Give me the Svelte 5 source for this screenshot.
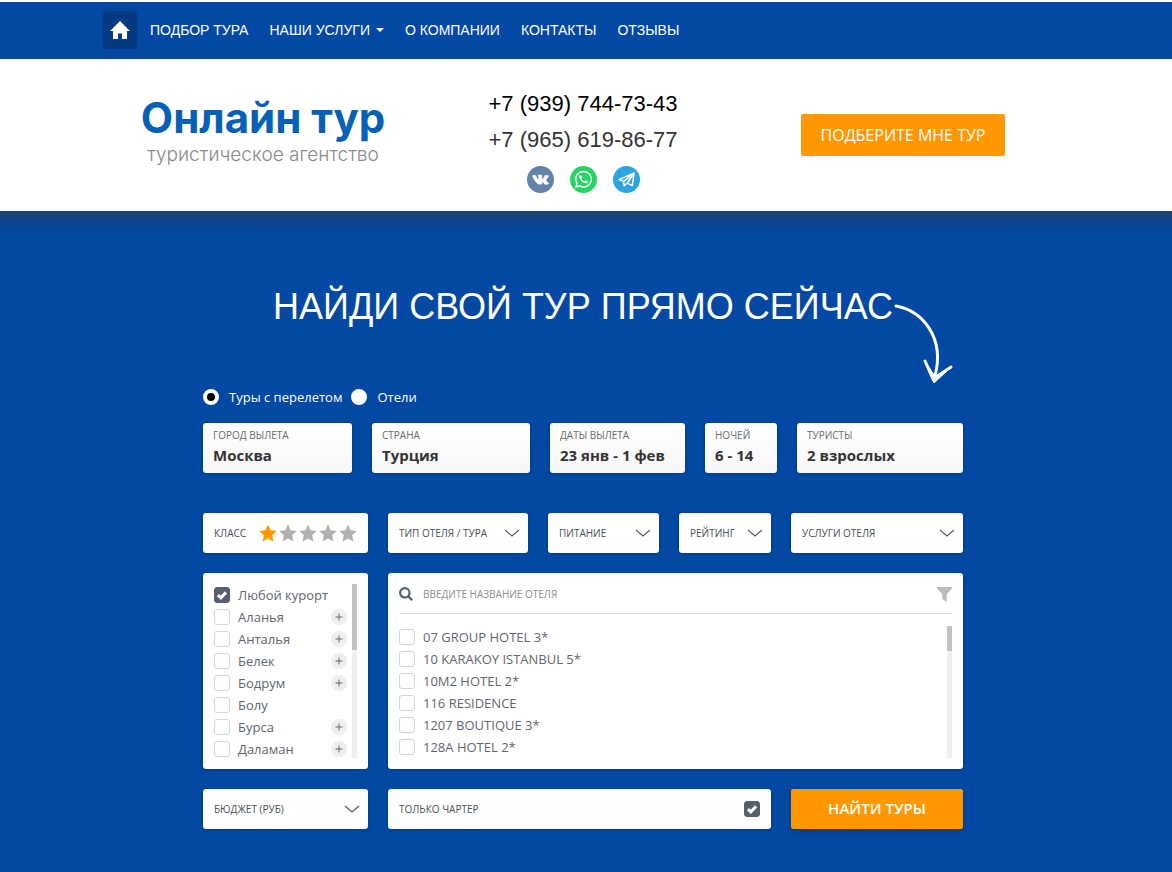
<script lang="ts">
  const menu = [
    { name: "ПОДБОР ТУРА" },
    { name: "НАШИ УСЛУГИ", dropdown: true },
    { name: "О КОМПАНИИ" },
    { name: "КОНТАКТЫ" },
    { name: "ОТЗЫВЫ" },
  ];

  let tourType = $state("tours");
  let stars = $state(1);
  let onlyCharter = $state(true);
  let hotelName = $state("");

  const params = [
    { label: "ГОРОД ВЫЛЕТА", value: "Москва" },
    { label: "СТРАНА", value: "Турция" },
    { label: "ДАТЫ ВЫЛЕТА", value: "23 янв - 1 фев" },
    { label: "НОЧЕЙ", value: "6 - 14" },
    { label: "ТУРИСТЫ", value: "2 взрослых" },
  ];

  const filters = ["ТИП ОТЕЛЯ / ТУРА", "ПИТАНИЕ", "РЕЙТИНГ", "УСЛУГИ ОТЕЛЯ"];

  let resorts = $state([
    { name: "Любой курорт", checked: true, nested: false },
    { name: "Аланья", checked: false, nested: true },
    { name: "Анталья", checked: false, nested: true },
    { name: "Белек", checked: false, nested: true },
    { name: "Бодрум", checked: false, nested: true },
    { name: "Болу", checked: false, nested: false },
    { name: "Бурса", checked: false, nested: true },
    { name: "Даламан", checked: false, nested: true },
  ]);

  let hotels = $state([
    { name: "07 GROUP HOTEL 3*", checked: false },
    { name: "10 KARAKOY ISTANBUL 5*", checked: false },
    { name: "10M2 HOTEL 2*", checked: false },
    { name: "116 RESIDENCE", checked: false },
    { name: "1207 BOUTIQUE 3*", checked: false },
    { name: "128A HOTEL 2*", checked: false },
  ]);
</script>

{#snippet checkbox(item)}
  <label class="check">
    <input type="checkbox" bind:checked={item.checked} />
    <svg class="tick" viewBox="0 0 16 16"><path d="M4 8.2l2.8 2.6L12 5.4" /></svg>
    <span>{item.name}</span>
  </label>
{/snippet}

{#snippet dropdown(title)}
  <div class="card select-card">
    <select aria-label={title}>
      <option>{title}</option>
    </select>
    <svg class="chevron" viewBox="0 0 16 8"><path d="M1 1l7 6 7-6" /></svg>
  </div>
{/snippet}

<div class="page">
  <nav class="navbar">
    <div class="container nav-inner">
      <a class="home" href="#home" aria-label="Главная">
        <svg viewBox="0 0 20 18">
          <path d="M10 0L0 10h3v8h5v-5.5h4V18h5v-8h3z" />
        </svg>
      </a>
      {#each menu as item}
        <a class="nav-link" href="#menu">
          {item.name}
          {#if item.dropdown}<span class="caret"></span>{/if}
        </a>
      {/each}
    </div>
  </nav>

  <header class="header">
    <div class="container header-inner">
      <a class="logo" href="#home">
        <span class="logo-title">Онлайн тур</span>
        <span class="logo-sub">туристическое агентство</span>
      </a>

      <div class="contacts">
        <a class="phone main" href="tel:+79397447343">+7 (939) 744-73-43</a>
        <a class="phone" href="tel:+79656198677">+7 (965) 619-86-77</a>
        <div class="social">
          <a href="#vk" aria-label="ВКонтакте">
            <svg viewBox="0 0 27 27">
              <circle cx="13.5" cy="13.5" r="13.5" fill="#6383a8" />
              <path
                transform="translate(1.5 2)"
                fill="#fff"
                stroke="#fff"
                stroke-width=".6"
                d="M12.785 16.241s.288-.032.436-.194c.136-.148.132-.427.132-.427s-.02-1.304.576-1.496c.588-.19 1.341 1.26 2.14 1.818.605.422 1.064.33 1.064.33l2.137-.03s1.117-.071.587-.964c-.043-.073-.308-.661-1.588-1.87-1.34-1.264-1.16-1.059.453-3.246.983-1.332 1.376-2.145 1.253-2.493-.117-.332-.84-.244-.84-.244l-2.406.015s-.178-.025-.31.056c-.13.079-.212.262-.212.262s-.382 1.03-.89 1.907c-1.07 1.85-1.499 1.948-1.674 1.832-.407-.267-.305-1.075-.305-1.648 0-1.793.267-2.54-.521-2.733-.262-.065-.454-.107-1.123-.114-.858-.009-1.585.003-1.996.208-.274.136-.485.44-.356.457.159.022.519.099.71.363.246.341.237 1.107.237 1.107s.142 2.11-.33 2.371c-.325.18-.77-.187-1.725-1.865-.489-.859-.859-1.81-.859-1.81s-.07-.176-.198-.27c-.154-.115-.37-.151-.37-.151l-2.286.015s-.343.01-.469.161C3.94 7.721 4.043 8 4.043 8s1.79 4.258 3.817 6.403c1.858 1.967 3.968 1.838 3.968 1.838h.957z"
              />
            </svg>
          </a>
          <a href="#whatsapp" aria-label="WhatsApp">
            <svg viewBox="0 0 27 27">
              <circle cx="13.5" cy="13.5" r="13.5" fill="#25d366" />
              <path
                transform="translate(5 4.8) scale(.71)"
                fill="#fff"
                d="M17.472 14.382c-.297-.149-1.758-.867-2.03-.967-.273-.099-.471-.148-.67.15-.197.297-.767.966-.94 1.164-.173.199-.347.223-.644.075-.297-.15-1.255-.463-2.39-1.475-.883-.788-1.48-1.761-1.653-2.059-.173-.297-.018-.458.13-.606.134-.133.298-.347.446-.52.149-.174.198-.298.298-.497.099-.198.05-.371-.025-.52-.075-.149-.669-1.612-.916-2.207-.242-.579-.487-.5-.669-.51-.173-.008-.371-.01-.57-.01-.198 0-.52.074-.792.372-.272.297-1.04 1.016-1.04 2.479 0 1.462 1.065 2.875 1.213 3.074.149.198 2.096 3.2 5.077 4.487.709.306 1.262.489 1.694.625.712.227 1.36.195 1.871.118.571-.085 1.758-.719 2.006-1.413.248-.694.248-1.289.173-1.413-.074-.124-.272-.198-.57-.347m-5.421 7.403h-.004a9.87 9.87 0 01-5.031-1.378l-.361-.214-3.741.982.998-3.648-.235-.374a9.86 9.86 0 01-1.51-5.26c.001-5.45 4.436-9.884 9.888-9.884 2.64 0 5.122 1.03 6.988 2.898a9.825 9.825 0 012.893 6.994c-.003 5.45-4.437 9.884-9.885 9.884m8.413-18.297A11.815 11.815 0 0012.05 0C5.495 0 .16 5.335.157 11.892c0 2.096.547 4.142 1.588 5.945L.057 24l6.305-1.654a11.882 11.882 0 005.683 1.448h.005c6.554 0 11.89-5.335 11.893-11.893a11.821 11.821 0 00-3.48-8.413z"
              />
            </svg>
          </a>
          <a href="#telegram" aria-label="Telegram">
            <svg viewBox="0 0 27 27">
              <circle cx="13.5" cy="13.5" r="13.5" fill="#2ca5e0" />
              <path
                fill="none"
                stroke="#fff"
                stroke-width="1.5"
                stroke-linejoin="round"
                d="M6 13.6L21.2 7l-2 12.6-4.9-2.6-3.2 2.8-.5-4.4zM10.6 15.4L21.2 7l-6.9 10"
              />
            </svg>
          </a>
        </div>
      </div>

      <a class="pick-tour" href="#pick">ПОДБЕРИТЕ МНЕ ТУР</a>
    </div>
  </header>

  <main class="hero">
    <h1>
      НАЙДИ СВОЙ ТУР ПРЯМО СЕЙЧАС
      <svg class="arrow" viewBox="0 0 60 82">
        <path d="M3 4C30 9 52 36 42 74" />
        <path d="M32 59l8 18 18-12" />
        <path class="tip" d="M34 62l7 19 14-13-13 6z" />
      </svg>
    </h1>

    <form class="search" onsubmit={(e) => e.preventDefault()}>
      <div class="types">
        <label>
          <input type="radio" value="tours" bind:group={tourType} />
          Туры с перелетом
        </label>
        <label>
          <input type="radio" value="hotels" bind:group={tourType} />
          Отели
        </label>
      </div>

      <div class="row params">
        {#each params as param}
          <button type="button" class="card param">
            <span class="param-label">{param.label}</span>
            <span class="param-value">{param.value}</span>
          </button>
        {/each}
      </div>

      <div class="row filters">
        <div class="card class-card">
          <span>КЛАСС</span>
          <div class="stars">
            {#each [1, 2, 3, 4, 5] as n}
              <button
                type="button"
                class="star"
                class:active={n <= stars}
                aria-label="Звёзд: {n}"
                onclick={() => (stars = n)}
              >
                <svg viewBox="0 0 18 18">
                  <path d="M9 .5l2.6 5.7 6.1.8-4.5 4.2 1.2 6.2L9 14.4l-5.4 3 1.2-6.2L.3 7l6.1-.8z" />
                </svg>
              </button>
            {/each}
          </div>
        </div>
        {#each filters as filter}
          {@render dropdown(filter)}
        {/each}
      </div>

      <div class="row lists">
        <div class="card list-card">
          <ul class="list">
            {#each resorts as resort}
              <li>
                {@render checkbox(resort)}
                {#if resort.nested}
                  <button type="button" class="plus" aria-label="Раскрыть: {resort.name}">
                    <svg viewBox="0 0 16 16"><path d="M8 4.5v7M4.5 8h7" /></svg>
                  </button>
                {/if}
              </li>
            {/each}
          </ul>
          <div class="scrollbar"><div class="thumb resorts-thumb"></div></div>
        </div>

        <div class="card hotels-card">
          <div class="hotel-search">
            <svg class="loupe" viewBox="0 0 14 14">
              <circle cx="5.8" cy="5.8" r="4.7" />
              <path d="M9.2 9.2l4 4" />
            </svg>
            <input
              type="text"
              aria-label="Название отеля"
              placeholder="ВВЕДИТЕ НАЗВАНИЕ ОТЕЛЯ"
              bind:value={hotelName}
            />
            <button type="button" class="funnel" aria-label="Фильтр">
              <svg viewBox="0 0 15 15"><path d="M0 0h15v1.5L9.7 7v8L5.3 12V7L0 1.5z" /></svg>
            </button>
          </div>
          <div class="hotel-body">
            <ul class="list">
              {#each hotels as hotel}
                <li>{@render checkbox(hotel)}</li>
              {/each}
            </ul>
            <div class="scrollbar"><div class="thumb hotels-thumb"></div></div>
          </div>
        </div>
      </div>

      <div class="row bottom">
        {@render dropdown("БЮДЖЕТ (РУБ)")}
        <label class="card check charter">
          <span>ТОЛЬКО ЧАРТЕР</span>
          <input type="checkbox" bind:checked={onlyCharter} />
          <svg class="tick" viewBox="0 0 16 16"><path d="M4 8.2l2.8 2.6L12 5.4" /></svg>
        </label>
        <button type="submit" class="submit">НАЙТИ ТУРЫ</button>
      </div>
    </form>
  </main>
</div>

<style>
  :global(body) {
    margin: 0;
    background: #0348a3;
  }

  .page,
  .page * {
    box-sizing: border-box;
  }

  .page {
    font-family: "Liberation Sans", Arial, sans-serif;
    background: #fff;
    padding-top: 2px;
  }

  a {
    text-decoration: none;
  }

  svg {
    display: block;
  }

  button,
  input,
  select {
    font-family: inherit;
  }

  button {
    border: none;
    padding: 0;
    background: none;
    cursor: pointer;
  }

  .navbar,
  .header,
  .hero {
    padding-right: 6px;
  }

  .container {
    max-width: 960px;
    margin: 0 auto;
  }

  .navbar {
    background: #0348a3;
  }

  .nav-inner {
    display: flex;
    align-items: center;
    gap: 21px;
    min-height: 57px;
    padding-bottom: 1px;
  }

  .home {
    display: flex;
    align-items: center;
    justify-content: center;
    width: 34px;
    height: 38px;
    margin-right: -8px;
    border-radius: 3px;
    background: #033a80;
  }

  .home svg {
    width: 20px;
    height: 18px;
    fill: #fff;
  }

  .nav-link {
    display: flex;
    align-items: center;
    gap: 6px;
    color: #fff;
    font-size: 14px;
    line-height: 20px;
  }

  .caret {
    border-top: 4px solid #fff;
    border-left: 4px solid transparent;
    border-right: 4px solid transparent;
  }

  .header {
    background: #fff;
  }

  .header-inner {
    display: grid;
    grid-template-columns: repeat(3, 1fr);
    align-items: center;
    justify-items: center;
    min-height: 152px;
  }

  .logo {
    display: flex;
    flex-direction: column;
    align-items: center;
    padding-bottom: 10px;
    font-family: Inter, sans-serif;
  }

  .logo-title {
    color: #0560b8;
    font-size: 42px;
    font-weight: 700;
    line-height: 50px;
  }

  .logo-sub {
    color: #8a8a8a;
    font-size: 19px;
    font-weight: 300;
    line-height: 24px;
  }

  .contacts {
    display: flex;
    flex-direction: column;
    align-items: center;
    padding-top: 9px;
  }

  .phone {
    color: #333;
    font-size: 22px;
    line-height: 36px;
  }

  .phone.main {
    color: #000;
  }

  .social {
    display: flex;
    gap: 16px;
    margin-top: 8px;
  }

  .social svg {
    width: 27px;
    height: 27px;
  }

  .pick-tour {
    padding: 0 20px;
    border-radius: 2px;
    background: #ff9800;
    color: #fff;
    font-family: "Open Sans", sans-serif;
    font-size: 16px;
    line-height: 42px;
  }

  .hero {
    padding-top: 76px;
    padding-bottom: 43px;
    background: linear-gradient(#1e4170, #0b4592 12px, #0348a3 24px);
  }

  h1 {
    position: relative;
    width: fit-content;
    margin: 0 auto;
    color: #fff;
    font-size: 36px;
    font-weight: 400;
    line-height: 40px;
  }

  .arrow {
    position: absolute;
    top: 15px;
    left: 100%;
    width: 60px;
    height: 82px;
    fill: none;
    stroke: #fff;
    stroke-width: 3;
    stroke-linecap: round;
  }

  .arrow .tip {
    fill: #fff;
    stroke-width: 1;
  }

  .search {
    max-width: 760px;
    margin: 60px auto 0;
    font-family: "Open Sans", sans-serif;
  }

  .types {
    display: flex;
    gap: 9px;
    margin-bottom: 16px;
  }

  .types label {
    display: flex;
    align-items: center;
    gap: 10px;
    color: #fff;
    font-size: 13px;
    line-height: 20px;
  }

  .types input {
    appearance: none;
    width: 16px;
    height: 16px;
    margin: 0;
    border: 4px solid #fff;
    border-radius: 50%;
    background: #fff;
  }

  .types input:checked {
    background: #000;
  }

  .row {
    display: grid;
    gap: 20px;
    margin-bottom: 20px;
  }

  .params {
    grid-template-columns: 149fr 158fr 135fr 72fr 166fr;
    margin-bottom: 40px;
  }

  .filters {
    grid-template-columns: 165fr 140fr 111fr 92fr 172fr;
  }

  .lists {
    grid-template-columns: 165fr 575fr;
  }

  .bottom {
    grid-template-columns: 165fr 383fr 172fr;
    margin-bottom: 0;
  }

  .card {
    min-width: 0;
    border-radius: 3px;
    background: #fff;
    box-shadow: 0 1px 4px rgba(0, 0, 0, 0.2);
  }

  .param {
    display: flex;
    flex-direction: column;
    padding: 3px 10px 7px;
    background: linear-gradient(#fff, #f7f7f7);
    text-align: left;
    white-space: nowrap;
  }

  .param-label {
    color: #6b6b6b;
    font-size: 10px;
    line-height: 18px;
  }

  .param-value {
    color: #333;
    font-size: 15px;
    font-weight: 700;
    line-height: 22px;
  }

  .class-card {
    display: flex;
    align-items: center;
    justify-content: space-between;
    height: 40px;
    padding: 0 11px;
    color: #4a4f57;
    font-size: 10px;
  }

  .stars {
    display: flex;
    gap: 2px;
  }

  .star svg {
    width: 18px;
    height: 18px;
    fill: #b0b0b0;
  }

  .star.active svg {
    fill: #ff9800;
  }

  .select-card {
    position: relative;
    height: 40px;
  }

  select {
    appearance: none;
    width: 100%;
    height: 100%;
    padding: 0 28px 0 11px;
    border: none;
    border-radius: 3px;
    background: transparent;
    color: #4a4f57;
    font-size: 10px;
  }

  .chevron {
    position: absolute;
    top: 16px;
    right: 8px;
    width: 16px;
    height: 8px;
    fill: none;
    stroke: #555b63;
    stroke-width: 1.2;
    pointer-events: none;
  }

  .list-card {
    display: flex;
    height: 196px;
    padding: 11px;
  }

  .list {
    flex: 1;
    margin: 0;
    padding: 0;
    overflow: hidden;
    list-style: none;
  }

  .list li {
    display: flex;
    align-items: center;
    justify-content: space-between;
    height: 22px;
    padding-right: 5px;
  }

  .check {
    display: flex;
    align-items: center;
    position: relative;
    gap: 8px;
    color: #5f6670;
    font-size: 13px;
    line-height: 22px;
  }

  .check input {
    appearance: none;
    width: 16px;
    height: 16px;
    margin: 0;
    border: 1px solid #d5d5d5;
    border-radius: 3px;
    background: #fff;
  }

  .check input:checked {
    border-color: #555f6d;
    background: #555f6d;
  }

  .tick {
    width: 16px;
    height: 16px;
    margin-left: -24px;
    fill: none;
    stroke: #fff;
    stroke-width: 3;
    z-index: 1;
    pointer-events: none;
  }

  .plus svg {
    width: 16px;
    height: 16px;
    border-radius: 50%;
    background: #eee;
    fill: none;
    stroke: #666;
  }

  .scrollbar {
    width: 5px;
    background: #f0f0f0;
  }

  .thumb {
    background: #c1c1c1;
  }

  .resorts-thumb {
    height: 66px;
  }

  .hotels-thumb {
    height: 25px;
  }

  .hotels-card {
    display: flex;
    flex-direction: column;
    height: 196px;
    padding: 0 11px 11px;
  }

  .hotel-search {
    display: flex;
    align-items: center;
    height: 41px;
    padding-top: 2px;
    border-bottom: 1px solid #ddd;
  }

  .loupe {
    width: 14px;
    height: 14px;
    fill: none;
    stroke: #555f6d;
    stroke-width: 2.2;
  }

  .hotel-search input {
    flex: 1;
    min-width: 0;
    padding: 0 10px;
    border: none;
    outline: none;
    background: transparent;
    color: #4a4f57;
    font-size: 10px;
  }

  .hotel-search input::placeholder {
    color: #8d8d8d;
  }

  .funnel svg {
    width: 15px;
    height: 15px;
    fill: #bbb;
  }

  .hotel-body {
    display: flex;
    flex: 1;
    min-height: 0;
    padding-top: 12px;
  }

  .charter {
    height: 40px;
    padding: 0 11px;
    color: #4a4f57;
    font-size: 10px;
  }

  .charter span {
    flex: 1;
  }

  .submit {
    padding-bottom: 2px;
    border-radius: 2px;
    background: #ff9800;
    box-shadow: 0 2px 5px rgba(0, 0, 0, 0.25);
    color: #fff;
    font-size: 15px;
    font-weight: 600;
  }
</style>
